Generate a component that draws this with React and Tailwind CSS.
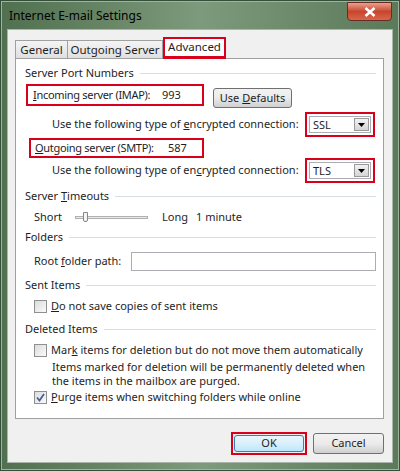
import React from "react";

const font = { fontFamily: '"Noto Sans", "Segoe UI", Arial, sans-serif' };

function Heading({ children, className = "" }) {
  return (
    <div className={"flex items-center h-[16px] " + className}>
      <span className="whitespace-nowrap">{children}</span>
      <div className="flex-1 ml-[6px] h-px bg-[#d5dfe5]" />
    </div>
  );
}

function Combo({ value }) {
  return (
    <div className="border-2 border-[#d9001b] p-[2px] w-[70px] h-[25px] flex">
      <div className="flex-1 flex bg-white border border-[#abadb3]">
        <div className="flex-1 pl-[3px] leading-[16px]">{value}</div>
        <div className="w-[15px] m-px bg-gradient-to-b from-[#f2f2f2] to-[#d5d5d5] border border-[#9a9a9a] flex items-center justify-center">
          <svg width="7" height="4" viewBox="0 0 7 4"><path d="M0 0h7L3.5 4z" fill="#000" /></svg>
        </div>
      </div>
    </div>
  );
}

function Check({ checked }) {
  return (
    <div className="w-[13px] h-[13px] border border-[#8e8f8f] bg-gradient-to-br from-[#dcdcdc] to-[#fafafa] flex items-center justify-center shrink-0">
      {checked && (
        <svg width="9" height="9" viewBox="0 0 9 9"><path d="M1 4.5l2.5 3L8 1" stroke="#4a5f97" strokeWidth="1.8" fill="none" /></svg>
      )}
    </div>
  );
}

export default function App() {
  return (
    <div style={font} className="w-[400px] h-[471px] text-[11px] text-[#1e1e1e] flex flex-col bg-[#34503a] p-px whitespace-nowrap">
      <div className="flex flex-col flex-1 border border-[#9fb49f] bg-gradient-to-r from-[#50704f] via-[#7e9a7c] to-[#5b7a5a]">
        {/* title bar */}
        <div className="h-[27px] flex items-start relative">
          <div className="pl-[7px] pt-[5px] text-[12px] text-black leading-[18px]">Internet E-mail Settings</div>
          <div className="ml-auto mr-[6px] w-[45px] h-[19px] rounded-b-[4px] border border-[#6b2a22] bg-gradient-to-b from-[#e8a08f] via-[#c8452d] to-[#d7664a] flex items-center justify-center">
            <svg width="12" height="10" viewBox="0 0 12 10"><path d="M1.5 1l9 8M10.5 1l-9 8" stroke="#fff" strokeWidth="2.6" /></svg>
          </div>
        </div>
        {/* body */}
        <div className="mx-[5px] mb-[6px] flex-1 flex flex-col border border-[#a9b6a9] bg-[#f0f0f0] pl-[7px] pr-[8px] pt-[7px]">
          {/* tabs */}
          <div className="flex items-end h-[21px] text-[11.5px]">
            <div className="w-[53px] h-[18px] border border-b-0 border-[#a0a0a0] bg-gradient-to-b from-[#f4f4f4] to-[#e0e0e0] leading-[17px] text-center">General</div>
            <div className="w-[95px] h-[18px] border border-b-0 border-l-0 border-[#a0a0a0] bg-gradient-to-b from-[#f4f4f4] to-[#e0e0e0] leading-[17px] text-center">Outgoing Server</div>
            <div className="w-[63px] h-[22px] mb-[-1px] relative z-10 border-2 border-b-[3px] border-[#d9001b] bg-white leading-[15px] text-center">Advanced</div>
          </div>
          {/* panel */}
          <div className="h-[361px] border border-[#a0a0a0] bg-white pl-[9px] pr-[7px] pt-[6px] flex flex-col">
            <Heading className="h-[17px]">Server Port Numbers</Heading>
            <div className="flex items-start mt-[2px] ml-[1px]">
              <div className="w-[178px] h-[22px] border-2 border-[#d9001b] flex items-center pl-[5px]">
                <span className="w-[127px] tracking-[-0.3px]"><u>I</u>ncoming server (IMAP):</span>
                <span className="pl-[2px]">993</span>
              </div>
              <div className="ml-[9px] mt-[4px] w-[79px] h-[20px] rounded-[3px] border border-[#707070] bg-gradient-to-b from-[#f2f2f2] via-[#ebebeb] to-[#cfcfcf] flex items-center justify-center">
                Use <u className="ml-[3px]">D</u>efaults
              </div>
            </div>
            <div className="flex items-center mt-[4px] h-[25px]">
              <div className="ml-[27px] w-[253px]">Use the following type of <u>e</u>ncrypted connection:</div>
              <Combo value="SSL" />
            </div>
            <div className="flex items-center mt-[1px]">
              <div className="ml-[4px] w-[175px] h-[20px] border-2 border-[#d9001b] flex items-center pl-[4px]">
                <span className="w-[131px] tracking-[-0.3px]"><u>O</u>utgoing server (SMTP):</span>
                <span className="pl-[2px]">587</span>
              </div>
            </div>
            <div className="flex items-center h-[25px]">
              <div className="ml-[27px] w-[253px]">Use the following type of en<u>c</u>rypted connection:</div>
              <Combo value="TLS" />
            </div>
            <Heading className="mt-[5px]">Server <u>T</u>imeouts</Heading>
            <div className="flex items-center mt-[4px] h-[18px]">
              <span className="ml-[9px] w-[41px]">Short</span>
              <div className="w-[73px] relative h-[10px]">
                <div className="absolute left-0 right-0 top-[4px] h-[3px] border border-[#b0b0b0] bg-[#e7eaea]" />
                <div className="absolute left-[8px] top-0 w-[5px] h-[10px] border border-[#888] bg-[#f4f4f4] rounded-b-[2px]" />
              </div>
              <span className="ml-[14px]">Long</span>
              <span className="ml-[8px]">1 minute</span>
            </div>
            <Heading className="mt-[3px]">Folders</Heading>
            <div className="flex items-center mt-[7px] h-[19px]">
              <span className="ml-[9px] w-[97px]">Root <u>f</u>older path:</span>
              <div className="flex-1 h-[19px] border border-[#abadb3] bg-white" />
            </div>
            <Heading className="mt-[6px]">Sent Items</Heading>
            <div className="flex items-center mt-[5px] ml-[9px] h-[16px]">
              <Check />
              <span className="ml-[4px]"><u>D</u>o not save copies of sent items</span>
            </div>
            <Heading className="mt-[7px]">Deleted Items</Heading>
            <div className="flex items-center mt-[5px] ml-[9px] h-[16px]">
              <Check />
              <span className="ml-[4px]">Mar<u>k</u> items for deletion but do not move them automatically</span>
            </div>
            <div className="ml-[27px] leading-[14px] mt-[2px]">
              Items marked for deletion will be permanently deleted when<br />the items in the mailbox are purged.
            </div>
            <div className="flex items-center mt-[1px] ml-[9px] h-[16px]">
              <Check checked />
              <span className="ml-[4px]"><u>P</u>urge items when switching folders while online</span>
            </div>
          </div>
          {/* buttons */}
          <div className="flex justify-end items-center mt-[13px] pr-0">
            <div className="w-[76px] h-[23px] border-2 border-[#d9001b] p-[1px]">
              <div className="h-full rounded-[3px] border border-[#3c7fb1] bg-gradient-to-b from-[#eaf6fd] via-[#d9f0fc] to-[#bee6fd] flex items-center justify-center">OK</div>
            </div>
            <div className="ml-[6px] w-[71px] h-[21px] rounded-[3px] border border-[#707070] bg-gradient-to-b from-[#f2f2f2] via-[#ebebeb] to-[#cfcfcf] flex items-center justify-center">Cancel</div>
          </div>
        </div>
      </div>
    </div>
  );
}
